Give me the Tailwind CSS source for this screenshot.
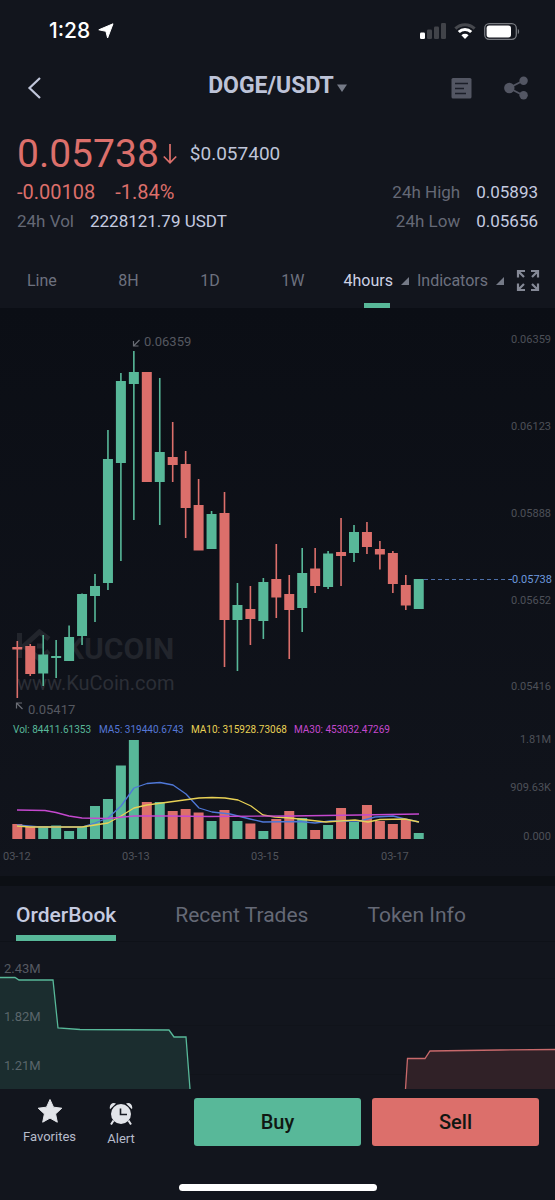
<!DOCTYPE html>
<html lang="en">
<head>
<meta charset="utf-8">
<meta name="viewport" content="width=device-width, initial-scale=1">
<title>DOGE/USDT</title>
<script src="https://cdn.jsdelivr.net/npm/@tailwindcss/browser@4"></script>
</head>
<body class="flex min-h-screen flex-col bg-[#12151d] font-['Roboto',sans-serif] text-[#c5cbe0]">

<!-- Status bar -->
<div class="flex h-[62px] items-center justify-between pr-[35px] pl-[49px] text-white">
  <div class="flex items-center gap-2">
    <span class="font-['Inter',sans-serif] text-[21px] leading-6 font-medium">1:28</span>
    <svg class="size-4" viewBox="0 0 16 16" fill="currentColor" aria-hidden="true"><path d="M15 .8 9.6 15 7.9 8.3.8 6.8Z" stroke="currentColor" stroke-linejoin="round"/></svg>
  </div>
  <div class="flex items-center gap-2">
    <svg class="h-4 w-[26px]" viewBox="0 0 26 16" fill="#414349" aria-hidden="true">
      <rect x="0" y="9.500" width="5" height="6.500" rx="1.200" fill="#fff"/><rect x="7" y="6.500" width="5" height="9.500" rx="1.200"/><rect x="14" y="3.500" width="5" height="12.500" rx="1.200"/><rect x="21" y="0" width="5" height="16" rx="1.200"/>
    </svg>
    <svg class="h-4 w-[22px]" viewBox="0 0 22 16" fill="none" aria-hidden="true">
      <path d="M1.400 5.600a13.600 13.600 0 0 1 19.200 0" stroke="#46484e" stroke-width="3"/>
      <path d="M4.800 9a8.800 8.800 0 0 1 12.400 0" stroke="#fff" stroke-width="3"/>
      <path d="M11 16 7.400 12.300a5.200 5.200 0 0 1 7.200 0Z" fill="#fff"/>
    </svg>
    <svg class="h-[17px] w-9" viewBox="0 0 36 17" fill="none" aria-hidden="true">
      <rect x=".7" y=".7" width="31.600" height="15.600" rx="4.500" stroke="#777a80" stroke-width="1.300"/>
      <rect x="2.600" y="2.600" width="24.400" height="11.800" rx="2.600" fill="#fff"/>
      <path d="M33.800 6v5c1.800-.6 1.800-4.400 0-5Z" fill="#777a80"/>
    </svg>
  </div>
</div>

<!-- Header -->
<header class="grid grid-cols-[1fr_auto_1fr] items-center pt-[10px] pr-[27px] pl-[27px]">
  <button type="button" aria-label="Back" class="mt-1 w-4"><svg class="h-6 w-4" viewBox="0 0 16 24" fill="none" stroke="#c0c6da" stroke-width="2.200"><path d="M13 2 2.500 12 13 22"/></svg></button>
  <button type="button" class="flex items-center gap-[3px] text-[23px] leading-[26px] font-bold text-[#bdc3d8]">
    <span>DOGE/USDT</span>
    <svg class="mt-1 h-2 w-[10px]" viewBox="0 0 10 8" aria-hidden="true"><path d="M0 .5h10L5 8Z" fill="#757a87"/></svg>
  </button>
  <div class="mt-1 flex items-center justify-end gap-8 text-[#535663]">
    <button type="button" aria-label="Orders"><svg class="block h-[22px] w-[21px]" viewBox="0 0 21 22"><rect x=".5" y="1" width="20" height="20.500" rx="1.500" fill="currentColor"/><path d="M4 6.500h13M4 11.500h9M4 16.500h11" stroke="#1b1e28" stroke-width="1.500"/></svg></button>
    <button type="button" aria-label="Share"><svg class="block h-6 w-6" viewBox="0 0 24 24"><path d="M19.500 4.500 5 12l14.500 7.500" stroke="currentColor" stroke-width="1.800" fill="none"/><g fill="currentColor"><circle cx="5.300" cy="12" r="5.200"/><circle cx="19.600" cy="4.700" r="4.200"/><circle cx="19.600" cy="19.300" r="4.200"/></g></svg></button>
  </div>
</header>

<!-- Price summary -->
<section class="px-[17px] pt-[31px]">
  <div class="flex items-center text-[#dc6f6b]">
    <span class="text-[39px] leading-[46px]">0.05738</span>
    <svg class="ml-1 h-5 w-[14px]" viewBox="0 0 14 20" fill="none" stroke="currentColor" stroke-width="1.700" aria-hidden="true"><path d="M7 0v18.500M.8 12.500 7 18.800l6.200-6.300"/></svg>
    <span class="ml-[13px] text-[19px] leading-6 text-[#bfc5d9]">$0.057400</span>
  </div>
  <div class="flex items-end justify-between">
    <div class="flex flex-col">
      <div class="flex gap-5 text-[20px] leading-[30px] text-[#dc6f6b]"><span>-0.00108</span><span>-1.84%</span></div>
      <div class="flex gap-4 text-[17px] leading-7"><span class="text-[#656976]">24h Vol</span><span>2228121.79 USDT</span></div>
    </div>
    <div class="grid grid-cols-[auto_auto] gap-x-4 text-right text-[17px]">
      <span class="leading-[30px] text-[#656976]">24h High</span><span class="leading-[30px]">0.05893</span>
      <span class="leading-7 text-[#656976]">24h Low</span><span class="leading-7">0.05656</span>
    </div>
  </div>
</section>

<!-- Interval tabs -->
<nav class="flex items-stretch justify-between pt-[30px] pr-[15px] pl-[27px] text-base leading-5 text-[#6d717f]">
  <div class="flex grow justify-between pt-[6px] pr-[39px]">
    <button type="button" class="self-start">Line</button>
    <button type="button" class="self-start">8H</button>
    <button type="button" class="self-start">1D</button>
    <button type="button" class="self-start">1W</button>
  </div>
  <div class="flex items-start pt-[6px]">
    <button type="button" class="flex flex-col items-start text-[#cdd2e4]">
      <span class="flex items-center gap-2">4hours<svg class="size-2" viewBox="0 0 8 8" aria-hidden="true"><path d="M8 0v8H0Z" fill="#757a87"/></svg></span>
      <span class="mt-3 ml-5 h-[5px] w-[26px] bg-[#58b899]"></span>
    </button>
    <button type="button" class="ml-2 flex items-center gap-2">Indicators<svg class="size-2" viewBox="0 0 8 8" aria-hidden="true"><path d="M8 0v8H0Z" fill="#757a87"/></svg></button>
  </div>
  <button type="button" aria-label="Full screen" class="ml-3 self-start pt-1"><svg class="block h-[23px] w-6" viewBox="0 0 24 23" fill="none" stroke="#858996" stroke-width="2.200"><path d="M2 8.500V2h7M2 2l6 6M15 2h7v6.500M22 2l-6 6M2 14.500V21h7M2 21l6-6M15 21h7v-6.500M22 21l-6-6"/></svg></button>
</nav>

<!-- Candlestick and volume chart -->
<section class="bg-linear-to-b from-[#0b0e15] to-[#11141c]">
  <svg class="block h-auto w-full" viewBox="0 308 555 568" role="img" aria-label="DOGE/USDT price and volume">
    <g fill="none" stroke="#22252c" stroke-width="5">
      <path d="M19.500 633v25M49 639 39.500 632 24 646l15.500 13L49 651"/>
      <path d="M37 646h6"/>
    </g>
    <text x="65" y="659" font-size="30" font-weight="700" fill="#22252c">KUCOIN</text>
    <text x="17" y="690" font-size="20" fill="#2b2e36">www.KuCoin.com</text>
    <g id="candles"></g>
    <g fill="none" stroke-width="1.300" stroke-linejoin="round">
      <polyline stroke="#4f78d8" points="17,825 40,827 82,827 95,823 108,818 121,806 134,788 147,783.500 160,782.500 173,785 186,794 199,808 212,812 230,814 250,819 263,822 300,821.500 315,823 330,821 360,821 375,817 393,816 405,819 419,822"/>
      <polyline stroke="#e8d155" points="17,826 30,827 82,827 108,823 121,816 134,808 147,805 173,801.500 199,798 212,797.500 225,798 238,800 251,806 263,815 275,817 290,818 326,822 340,821 355,820 368,822 380,819.500 405,819 419,822"/>
      <polyline stroke="#c548cf" points="17,810 45,810.500 56,812.500 69,816 82,818 108,818.500 134,816 170,816 210,816.500 290,816 360,815 419,814"/>
    </g>
    <path d="M424 579.500h88" stroke="#4d6fa8" stroke-dasharray="4 3"/>
    <g fill="none" stroke="#6a6d75" stroke-width="1.200"><path d="M139.500 340 134 345.500M133.500 341v5h5"/><path d="M22.500 709 17 703.500M16.500 708.500v-5.500h5.500"/></g>
    <g font-size="13" fill="#555860"><text x="144" y="346">0.06359</text><text x="28" y="714">0.05417</text></g>
    <g font-size="11" fill="#4d5058" text-anchor="end">
      <text x="551" y="343">0.06359</text><text x="551" y="430">0.06123</text><text x="551" y="517">0.05888</text>
      <text x="552" y="583" fill="#6c98dd">-0.05738</text>
      <text x="551" y="604">0.05652</text><text x="551" y="690">0.05416</text>
      <text x="551" y="743">1.81M</text><text x="551" y="791">909.63K</text><text x="551" y="840">0.000</text>
    </g>
    <g font-size="10">
      <text x="13" y="733" fill="#58b899">Vol: 84411.61353</text><text x="99" y="733" fill="#5577d6">MA5: 319440.6743</text>
      <text x="191" y="733" fill="#e8d155">MA10: 315928.73068</text><text x="294" y="733" fill="#c548cf">MA30: 453032.47269</text>
    </g>
    <g font-size="11" fill="#50535b"><text x="3" y="860">03-12</text><text x="122" y="860">03-13</text><text x="251" y="860">03-15</text><text x="381" y="860">03-17</text></g>
  </svg>
</section>
<div class="h-[10px] bg-[#0c0f14]"></div>

<!-- Order book -->
<nav class="flex gap-[59px] border-b border-[#0e1118] px-4 pt-4 text-[21px] leading-[26px] text-[#656976]">
  <button type="button" class="border-b-[6px] border-[#58b899] pb-[7px] font-medium text-[#c5cbe0]">OrderBook</button>
  <button type="button" class="self-start">Recent Trades</button>
  <button type="button" class="self-start">Token Info</button>
</nav>
<svg class="block h-auto w-full" viewBox="0 942 555 147" role="img" aria-label="Market depth">
  <path d="M0 978.500h555M0 1025.500h555M0 1074.500h555" stroke="#10131a"/>
  <path d="M0 977.500h15l4 2.500h34l5 48 22 1.500 89 .5 5 7h12l4 52H0Z" fill="#1b2d2f"/>
  <path d="M0 977.500h15l4 2.500h34l5 48 22 1.500 89 .5 5 7h12l4 52" fill="none" stroke="#58b899" stroke-width="1.300"/>
  <path d="m405.500 1089 2-30.500H425l5-7.500 70-1 55-.5v39.500Z" fill="#302127"/>
  <path d="m405.500 1089 2-30.500H425l5-7.500 70-1 55-.5" fill="none" stroke="#c8696b" stroke-width="1.300"/>
  <g font-size="13" fill="#9a9fa8" fill-opacity=".5"><text x="4" y="973">2.43M</text><text x="4" y="1021">1.82M</text><text x="4" y="1070">1.21M</text></g>
</svg>

<!-- Action bar -->
<footer class="flex items-start pt-[9px] pr-4 pl-[22px]">
  <button type="button" class="flex w-[55px] flex-col items-center text-[13px] leading-4 text-[#b6bccb]">
    <svg class="h-[26px] w-[26px]" viewBox="0 0 26 26" aria-hidden="true"><path d="m13 1.500 3.500 7.700 8.300 1-6.200 5.700 1.700 8.300-7.300-4.100-7.300 4.100 1.700-8.300L1.200 10.200l8.300-1Z" fill="#e2e4e9" stroke="#e2e4e9" stroke-linejoin="round"/></svg>
    <span class="mt-[5px]">Favorites</span>
  </button>
  <button type="button" class="ml-6 flex w-10 flex-col items-center pt-1 text-[13px] leading-4 text-[#b6bccb]">
    <svg class="h-6 w-6" viewBox="0 0 24 24" aria-hidden="true"><g fill="#e2e4e9"><circle cx="12" cy="12" r="10"/><path d="M1 7.200C-.3 3 3.500-.3 7 1.600ZM23 7.200c1.300-4.200-2.500-7.500-6-5.600Z"/></g><path d="m4.500 18.500-2.500 4M19.500 18.500l2.500 4" stroke="#e2e4e9" stroke-width="2"/><path d="M11.500 6.500v6h6.500" fill="none" stroke="#181b24" stroke-width="1.600"/></svg>
    <span class="mt-[5px]">Alert</span>
  </button>
  <div class="ml-[53px] grid grow grid-cols-2 gap-[11px] text-[20px] leading-6 font-medium text-[#101712]">
    <button type="button" class="rounded-[3px] bg-[#58b899] py-3">Buy</button>
    <button type="button" class="rounded-[3px] bg-[#dc6f6b] py-3">Sell</button>
  </div>
</footer>
<div class="mx-auto mt-[37px] mb-[10px] h-[7px] w-[198px] rounded-full bg-white"></div>

<script>
// [direction, high, low, body top, body bottom, volume bar top]
const bars = [
  ['r',641,698,647,649.5,824],['r',644,676,646,674,827],['g',635,686,654.5,673.5,826],['g',640,678,656,658,825.5],
  ['g',625.5,661,637,661,831],['g',593.5,645,594,636,827],['g',574,622,586,596,806],['g',430,590,459,583,799],
  ['g',373,561,381,463,765.5],['g',351,520,372,384,740],['r',372,482,372,482,802],['g',378,525,452,482,802],
  ['r',422,482,457,465,811],['r',451,538,464,508,809],['r',479,550,505,550.5,812.5],['g',511,549,514,549,821],
  ['r',492,667,513,620,810],['g',583,671,605,620,821],['r',586,645,609,619,823.5],['g',578,639,582,621,831],
  ['r',544,618,579,597.5,819],['r',575,659,594,610,811],['g',548,632,573,608,818],['r',548,593,568.5,586,830],
  ['g',551,589,553.5,587,825],['r',518,586,552,556,808],['g',525,562,532,553,822],['r',522,554,532,547,805],
  ['r',541,569.5,549,554.5,821],['r',551,593,553,584,824],['r',575,610,585,605.5,820],['g',579,609,579,609,833]
];
const colors = { r: '#dc6f6b', g: '#58b899' };
const layer = document.getElementById('candles');
const box = (x, top, width, bottom, fill) => {
  const rect = document.createElementNS('http://www.w3.org/2000/svg', 'rect');
  Object.entries({ x, y: top, width, height: bottom - top, fill }).forEach(([k, v]) => rect.setAttribute(k, v));
  layer.appendChild(rect);
};
bars.forEach(([dir, high, low, top, bottom, volume], i) => {
  const center = 17.3 + 12.95 * i;
  box(center - 0.8, high, 1.6, low, colors[dir]);
  box(center - 5, top, 10, bottom, colors[dir]);
  box(center - 5, volume, 10, 839, colors[dir]);
});
</script>
</body>
</html>
